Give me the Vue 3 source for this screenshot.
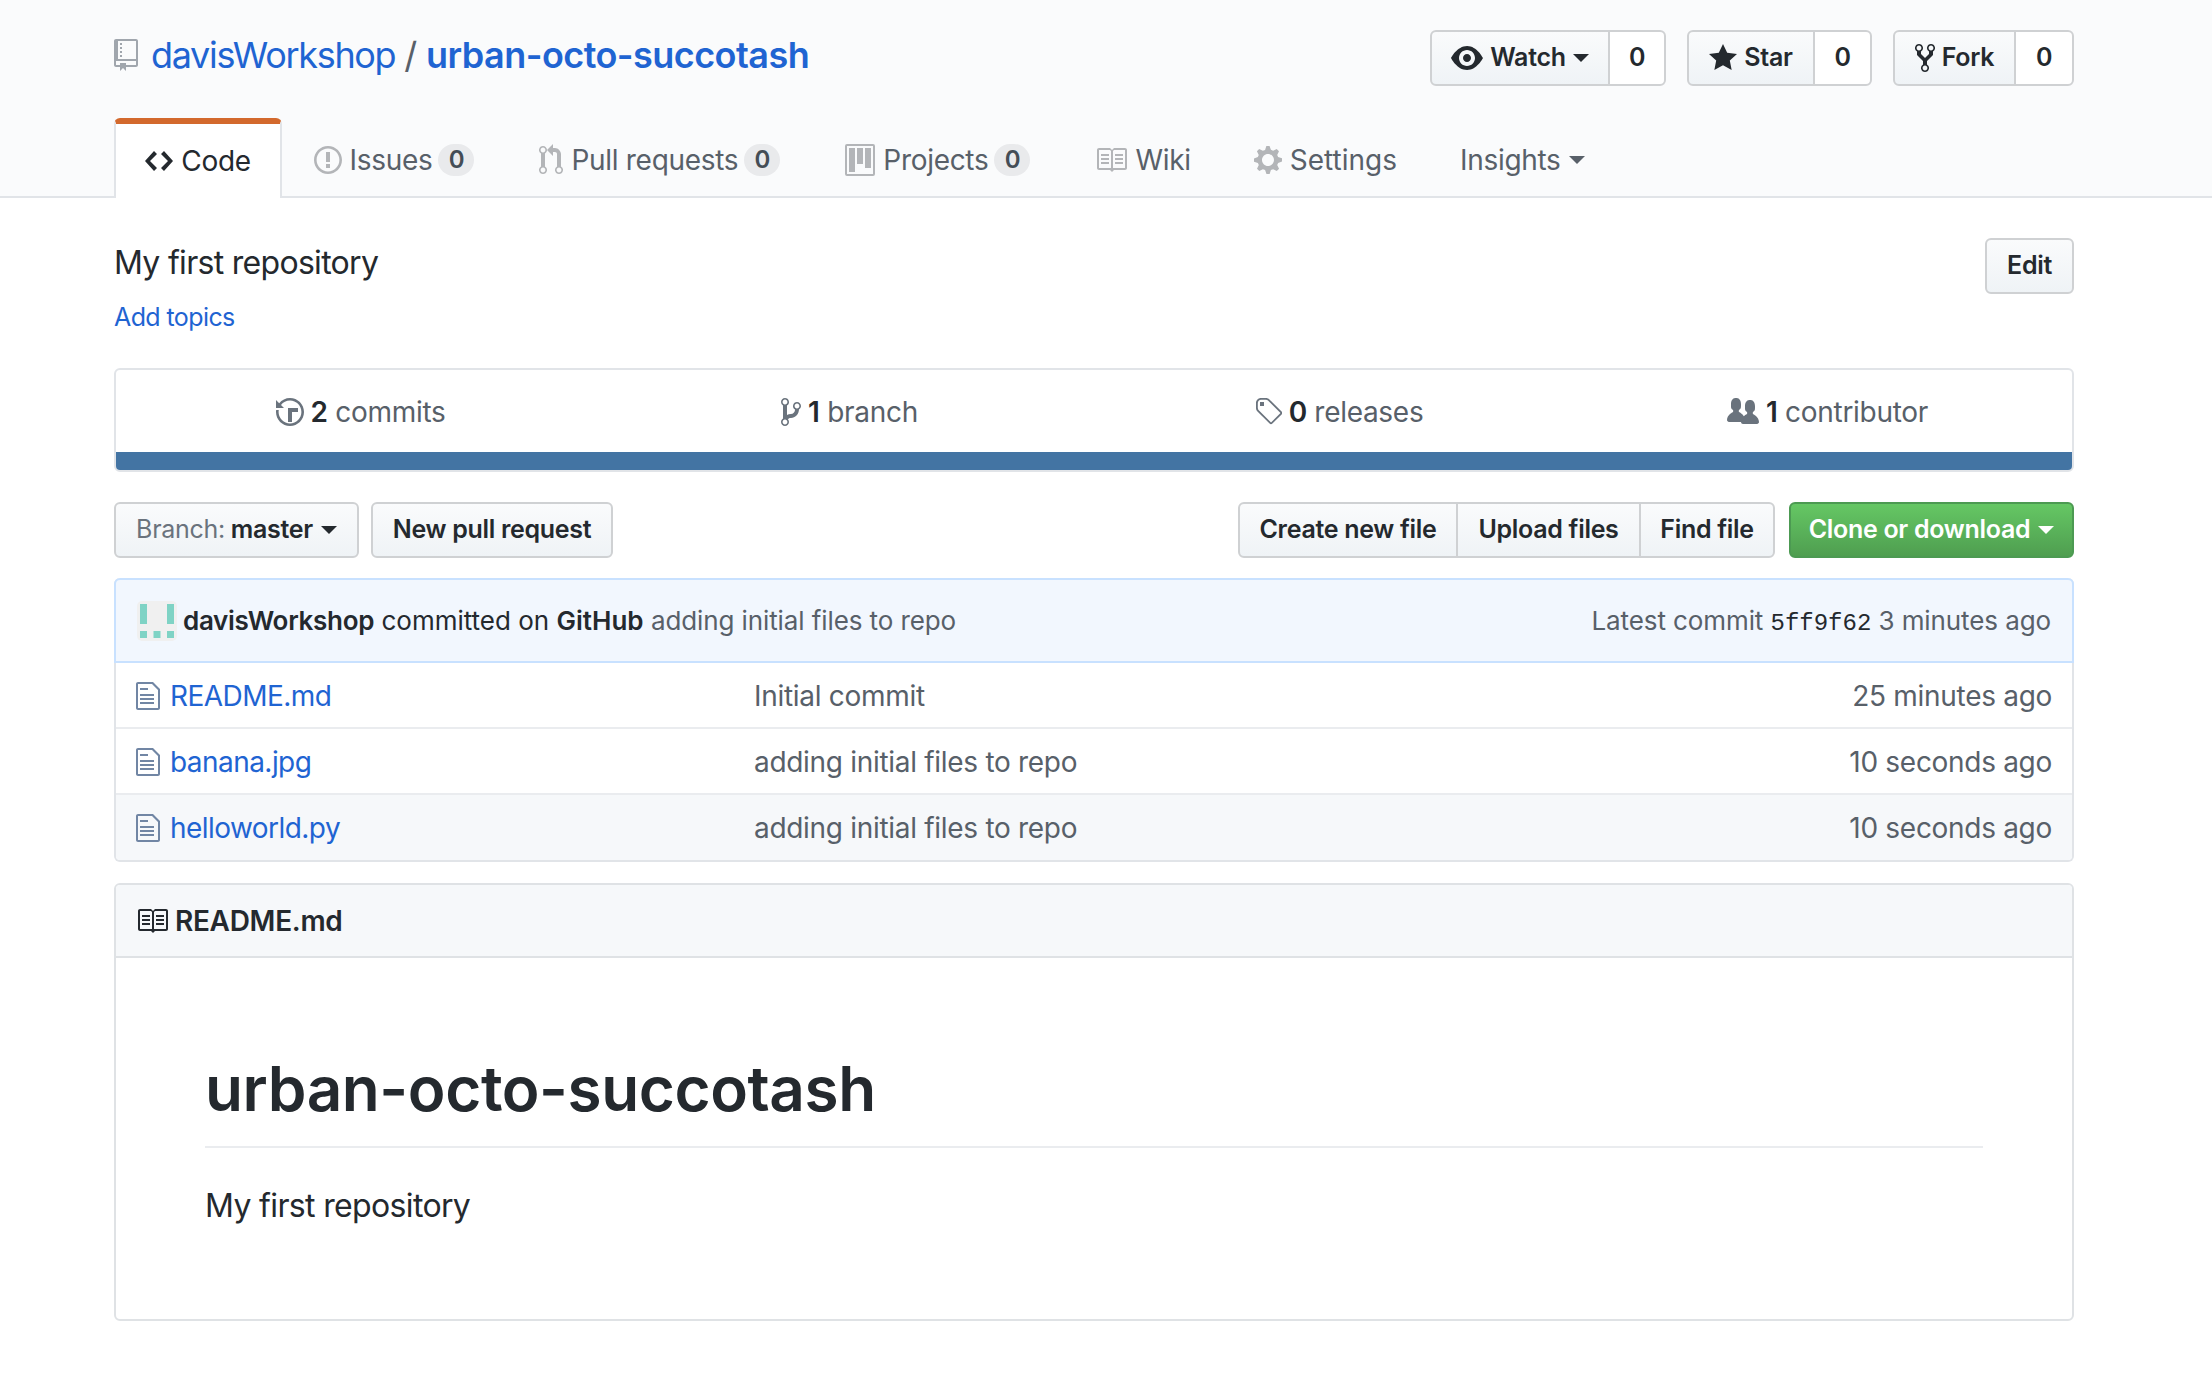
<script setup>
// Repository landing page, drawn at twice the usual scale of the old GitHub layout.
const ICONS = {
  repo: ["0 0 12 16", "M4 9H3V8h1v1zm0-3H3v1h1V6zm0-2H3v1h1V4zm0-2H3v1h1V2zm8-1v12c0 .55-.45 1-1 1H6v2l-1.5-1.5L3 16v-2H1c-.55 0-1-.45-1-1V1c0-.55.45-1 1-1h10c.55 0 1 .45 1 1zm-1 10H1v2h2v-1h3v1h5v-2zm0-10H2v9h9V1z"],
  eye: ["0 0 16 16", "M8.06 2C3 2 0 8 0 8s3 6 8.06 6C13 14 16 8 16 8s-3-6-7.94-6zM8 12c-2.2 0-4-1.78-4-4 0-2.2 1.8-4 4-4 2.22 0 4 1.8 4 4 0 2.22-1.78 4-4 4zm2-4c0 1.11-.89 2-2 2-1.11 0-2-.89-2-2 0-1.11.89-2 2-2 1.11 0 2 .89 2 2z"],
  star: ["0 0 14 16", "M14 6l-4.9-.64L7 1 4.9 5.36 0 6l3.6 3.26L2.67 14 7 11.67 11.33 14l-.93-4.74L14 6z"],
  fork: ["0 0 10 16", "M8 1a1.993 1.993 0 0 0-1 3.72V6L5 8 3 6V4.72A1.993 1.993 0 0 0 2 1a1.993 1.993 0 0 0-1 3.72V6.5l3 3v1.78A1.993 1.993 0 0 0 5 15a1.993 1.993 0 0 0 1-3.72V9.5l3-3V4.72A1.993 1.993 0 0 0 8 1zM2 4.2C1.34 4.2.8 3.65.8 3c0-.65.55-1.2 1.2-1.2.65 0 1.2.55 1.2 1.2 0 .65-.55 1.2-1.2 1.2zm3 10c-.66 0-1.2-.55-1.2-1.2 0-.65.55-1.2 1.2-1.2.65 0 1.2.55 1.2 1.2 0 .65-.55 1.2-1.2 1.2zm3-10c-.66 0-1.2-.55-1.2-1.2 0-.65.55-1.2 1.2-1.2.65 0 1.2.55 1.2 1.2 0 .65-.55 1.2-1.2 1.2z"],
  code: ["0 0 14 16", "M9.5 3L8 4.5 11.5 8 8 11.5 9.5 13 14 8 9.5 3zm-5 0L0 8l4.5 5L6 11.5 2.5 8 6 4.5 4.5 3z"],
  issue: ["0 0 14 16", "M7 2.3c3.14 0 5.7 2.56 5.7 5.7s-2.56 5.7-5.7 5.7A5.71 5.71 0 0 1 1.3 8c0-3.14 2.56-5.7 5.7-5.7zM7 1C3.14 1 0 4.14 0 8s3.14 7 7 7 7-3.14 7-7-3.14-7-7-7zm1 3H6v5h2V4zm0 6H6v2h2v-2z"],
  pull: ["0 0 12 16", "M11 11.28V5c-.03-.78-.34-1.47-.94-2.06C9.46 2.35 8.78 2.03 8 2H7V0L4 3l3 3V4h1c.27.02.48.11.69.31.21.2.3.42.31.69v6.28A1.993 1.993 0 0 0 10 15a1.993 1.993 0 0 0 1-3.72zm-1 2.92c-.66 0-1.2-.55-1.2-1.2 0-.65.55-1.2 1.2-1.2.65 0 1.2.55 1.2 1.2 0 .65-.55 1.2-1.2 1.2zM4 3c0-1.11-.89-2-2-2a1.993 1.993 0 0 0-1 3.72v6.56A1.993 1.993 0 0 0 2 15a1.993 1.993 0 0 0 1-3.72V4.72c.59-.34 1-.98 1-1.72zm-.8 10c0 .66-.55 1.2-1.2 1.2-.65 0-1.2-.55-1.2-1.2 0-.65.55-1.2 1.2-1.2.65 0 1.2.55 1.2 1.2zM2 4.2C1.34 4.2.8 3.65.8 3c0-.65.55-1.2 1.2-1.2.65 0 1.2.55 1.2 1.2 0 .65-.55 1.2-1.2 1.2z"],
  project: ["0 0 15 16", "M10 12h3V2h-3v10zm-4-2h3V2H6v8zm-4 4h3V2H2v12zm-1 1h13V1H1v14zM14 0H1a1 1 0 0 0-1 1v14a1 1 0 0 0 1 1h13a1 1 0 0 0 1-1V1a1 1 0 0 0-1-1z"],
  book: ["0 0 16 16", "M3 5h4v1H3V5zm0 3h4V7H3v1zm0 2h4V9H3v1zm11-5h-4v1h4V5zm0 2h-4v1h4V7zm0 2h-4v1h4V9zm2-6v9c0 .55-.45 1-1 1H9.5l-1 1-1-1H2c-.55 0-1-.45-1-1V3c0-.55.45-1 1-1h5.5l1 1 1-1H15c.55 0 1 .45 1 1zm-8 .5L7.5 3H2v9h6V3.5zm7-.5H9.5l-.5.5V12h6V3z"],
  gear: ["0 0 14 16", "M14 8.77v-1.6l-1.94-.64-.45-1.09.88-1.84-1.13-1.13-1.81.91-1.09-.45-.69-1.92h-1.6l-.63 1.94-1.11.45-1.84-.88-1.13 1.13.91 1.81-.45 1.09L0 7.23v1.59l1.94.64.45 1.09-.88 1.84 1.13 1.13 1.81-.91 1.09.45.69 1.92h1.59l.63-1.94 1.11-.45 1.84.88 1.13-1.13-.92-1.81.47-1.09L14 8.75v.02zM7 11c-1.66 0-3-1.34-3-3s1.34-3 3-3 3 1.34 3 3-1.34 3-3 3z"],
  history: ["0 0 14 16", "M8 13H6V6h5v2H8v5zM7 1C4.81 1 2.87 2.02 1.59 3.59L0 2v4h4L2.5 4.5C3.55 3.17 5.17 2.3 7 2.3c3.14 0 5.7 2.56 5.7 5.7s-2.56 5.7-5.7 5.7A5.71 5.71 0 0 1 1.3 8c0-.34.03-.67.09-1H.08C.03 7.33 0 7.66 0 8c0 3.86 3.14 7 7 7s7-3.14 7-7-3.14-7-7-7z"],
  branch: ["0 0 10 16", "M10 5c0-1.11-.89-2-2-2a1.993 1.993 0 0 0-1 3.72v.3c-.02.52-.23.98-.63 1.38-.4.4-.86.61-1.38.63-.83.02-1.48.16-2 .45V4.72a1.993 1.993 0 0 0-1-3.72C.88 1 0 1.89 0 3a2 2 0 0 0 1 1.72v6.56c-.59.35-1 .99-1 1.72 0 1.11.89 2 2 2 1.11 0 2-.89 2-2 0-.53-.2-1-.53-1.36.09-.06.48-.41.59-.47.25-.11.56-.17.94-.17 1.05-.05 1.95-.45 2.75-1.25S8.95 7.77 9 6.73h-.02C9.59 6.37 10 5.73 10 5zM2 1.8c.66 0 1.2.55 1.2 1.2 0 .65-.55 1.2-1.2 1.2C1.35 4.2.8 3.65.8 3c0-.65.55-1.2 1.2-1.2zm0 12.41c-.66 0-1.2-.55-1.2-1.2 0-.65.55-1.2 1.2-1.2.65 0 1.2.55 1.2 1.2 0 .65-.55 1.2-1.2 1.2zm6-8c-.66 0-1.2-.55-1.2-1.2 0-.65.55-1.2 1.2-1.2.65 0 1.2.55 1.2 1.2 0 .65-.55 1.2-1.2 1.2z"],
  tag: ["0 0 14 16", "M7.73 1.73C7.26 1.26 6.62 1 5.96 1H3.5C2.13 1 1 2.13 1 3.5v2.47c0 .66.27 1.3.73 1.77l6.06 6.06c.39.39 1.02.39 1.41 0l4.59-4.59a.996.996 0 0 0 0-1.41L7.73 1.73zM2.38 7.09c-.31-.3-.47-.7-.47-1.13V3.5c0-.88.72-1.59 1.59-1.59h2.47c.42 0 .83.16 1.13.47l6.14 6.13-4.73 4.73-6.13-6.15zM3.01 3h2v2H3V3h.01z"],
  people: ["0 0 16 16", "M16 12.999c0 .439-.45 1-1 1H7.995c-.539 0-.994-.447-.995-.999H1c-.54 0-1-.561-1-1 0-2.634 3-4 3-4s.229-.409 0-1c-.841-.621-1.058-.59-1-3 .058-2.419 1.367-3 2.5-3s2.442.58 2.5 3c.058 2.41-.159 2.379-1 3-.229.59 0 1 0 1s1.549.711 2.42 2.088C9.196 9.369 10 8.999 10 8.999s.229-.409 0-1c-.841-.62-1.058-.59-1-3 .058-2.419 1.367-3 2.5-3s2.437.581 2.495 3c.059 2.41-.158 2.38-1 3-.229.59 0 1 0 1s3.005 1.366 3.005 4z"],
  file: ["0 0 12 16", "M6 5H2V4h4v1zM2 8h7V7H2v1zm0 2h7V9H2v1zm0 2h7v-1H2v1zm10-7.5V14c0 .55-.45 1-1 1H1c-.55 0-1-.45-1-1V2c0-.55.45-1 1-1h7.5L12 4.5zM11 5L8 2H1v12h10V5z"],
};

const actions = [
  { icon: "eye", w: 32, label: "Watch", caret: true, count: 0 },
  { icon: "star", w: 28, label: "Star", count: 0 },
  { icon: "fork", w: 20, label: "Fork", count: 0 },
];
const tabs = [
  { icon: "code", w: 28, label: "Code", active: true },
  { icon: "issue", w: 28, label: "Issues", count: 0 },
  { icon: "pull", w: 24, label: "Pull requests", count: 0 },
  { icon: "project", w: 30, label: "Projects", count: 0 },
  { icon: "book", w: 32, label: "Wiki" },
  { icon: "gear", w: 28, label: "Settings" },
  { label: "Insights", caret: true },
];
const stats = [
  { icon: "history", w: 28, num: 2, label: "commits" },
  { icon: "branch", w: 20, num: 1, label: "branch" },
  { icon: "tag", w: 28, num: 0, label: "releases" },
  { icon: "people", w: 32, num: 1, label: "contributor" },
];
const files = [
  { name: "README.md", msg: "Initial commit", age: "25 minutes ago" },
  { name: "banana.jpg", msg: "adding initial files to repo", age: "10 seconds ago" },
  { name: "helloworld.py", msg: "adding initial files to repo", age: "10 seconds ago" },
];
</script>

<template>
  <div class="page">
    <header class="head">
      <div class="wrap">
        <div class="title-row">
          <h1 class="title">
            <svg class="ic repo-ic" width="24" height="32" :viewBox="ICONS.repo[0]"><path :d="ICONS.repo[1]" /></svg>
            <a class="owner">davisWorkshop</a>
            <span class="slash">/</span>
            <a class="name">urban-octo-succotash</a>
          </h1>
          <div class="actions">
            <div v-for="a in actions" :key="a.label" class="action" :class="a.label.toLowerCase()">
              <span class="btn action-btn">
                <svg class="ic" :width="a.w" height="32" :viewBox="ICONS[a.icon][0]"><path :d="ICONS[a.icon][1]" /></svg>
                <span>{{ a.label }}</span>
                <i v-if="a.caret" class="caret" />
              </span>
              <span class="social-count">{{ a.count }}</span>
            </div>
          </div>
        </div>
        <nav class="tabs">
          <a v-for="t in tabs" :key="t.label" class="tab" :class="{ active: t.active }">
            <svg v-if="t.icon" class="ic" :width="t.w" height="32" :viewBox="ICONS[t.icon][0]"><path :d="ICONS[t.icon][1]" /></svg>
            <span class="tab-label">{{ t.label }}</span>
            <span v-if="t.count !== undefined" class="counter">{{ t.count }}</span>
            <i v-if="t.caret" class="caret" />
          </a>
        </nav>
      </div>
    </header>

    <main class="wrap">
      <section class="meta">
        <div>
          <div class="desc">My first repository</div>
          <a class="topics">Add topics</a>
        </div>
        <span class="btn edit">Edit</span>
      </section>

      <section class="summary">
        <ul class="numbers">
          <li v-for="s in stats" :key="s.label">
            <svg class="ic" :width="s.w" height="32" :viewBox="ICONS[s.icon][0]"><path :d="ICONS[s.icon][1]" /></svg>
            <span><b>{{ s.num }}</b> {{ s.label }}</span>
          </li>
        </ul>
        <div class="lang-bar" />
      </section>

      <section class="file-nav">
        <div class="nav-left">
          <span class="btn branch"><em>Branch:</em> master <i class="caret" /></span>
          <span class="btn">New pull request</span>
        </div>
        <div class="nav-right">
          <div class="btn-group">
            <span class="btn">Create new file</span>
            <span class="btn">Upload files</span>
            <span class="btn">Find file</span>
          </div>
          <span class="btn primary">Clone or download <i class="caret" /></span>
        </div>
      </section>

      <section class="files">
        <div class="tease">
          <div class="tease-left">
            <svg class="avatar" width="40" height="40" viewBox="0 0 40 40">
              <rect width="40" height="40" rx="5" fill="#f0f0f0" />
              <g fill="#7fd3c5">
                <rect x="3" y="3" width="7" height="20" />
                <rect x="30" y="3" width="7" height="20" />
                <rect x="3" y="30" width="7" height="7" />
                <rect x="16.5" y="30" width="7" height="7" />
                <rect x="30" y="30" width="7" height="7" />
              </g>
            </svg>
            <span><b>davisWorkshop</b> committed on <b>GitHub</b> <span class="muted">adding initial files to repo</span></span>
          </div>
          <div class="muted tease-right">Latest commit <code>5ff9f62</code> 3 minutes ago</div>
        </div>
        <div v-for="(f, i) in files" :key="f.name" class="file-row" :class="{ last: i === files.length - 1 }">
          <div class="file-name">
            <svg class="file-ic" width="24" height="32" :viewBox="ICONS.file[0]"><path :d="ICONS.file[1]" /></svg>
            <a>{{ f.name }}</a>
          </div>
          <div class="file-msg">{{ f.msg }}</div>
          <div class="file-age">{{ f.age }}</div>
        </div>
      </section>

      <section class="readme">
        <div class="readme-head">
          <svg class="book-ic" width="32" height="32" :viewBox="ICONS.book[0]"><path :d="ICONS.book[1]" /></svg>
          README.md
        </div>
        <article class="readme-body">
          <h2>urban-octo-succotash</h2>
          <p>My first repository</p>
        </article>
      </section>
    </main>
  </div>
</template>

<style scoped>
* {
  box-sizing: border-box;
}
.page {
  min-height: 1390px;
  background: #fff;
  color: #24292e;
  font: 28px/1.5 Inter, "Noto Sans", sans-serif;
  letter-spacing: -0.3px;
}
.wrap {
  width: 1960px;
  margin-left: 114px;
}
.ic {
  fill: currentColor;
  fill-rule: evenodd;
  flex: none;
}
.head {
  height: 198px;
  background: #fafbfc;
  border-bottom: 2px solid #e1e4e8;
}
.title-row {
  display: flex;
  justify-content: space-between;
  padding-top: 30px;
  height: 86px;
}
.title {
  display: flex;
  align-items: center;
  height: 50px;
  margin: 0;
  font-size: 36px;
  font-weight: 400;
  color: #586069;
}
.repo-ic {
  color: #a0a6ad;
  margin-right: 13px;
}
.owner,
.name {
  color: #1f64d2;
}
.owner {
  letter-spacing: -1.32px;
}
.slash {
  margin: 0 9px;
}
.name {
  font-weight: 600;
  letter-spacing: -0.55px;
}
.actions {
  display: flex;
  gap: 21px;
}
.action {
  display: flex;
  height: 56px;
}
.watch {
  width: 236px;
}
.star {
  width: 185px;
}
.fork {
  width: 181px;
}
.btn {
  display: inline-flex;
  align-items: center;
  justify-content: center;
  height: 56px;
  padding: 0 20px;
  border: 2px solid #cfd1d3;
  border-radius: 6px;
  background: linear-gradient(#fafbfc, #eff3f6);
  font-size: 25px;
  font-weight: 600;
  white-space: pre;
}
.action-btn {
  flex: 1;
  gap: 7px;
  padding: 0;
  border-radius: 6px 0 0 6px;
}
.social-count {
  display: flex;
  align-items: center;
  justify-content: center;
  width: 58px;
  margin-left: -2px;
  border: 2px solid #cfd1d3;
  border-radius: 0 6px 6px 0;
  background: #fff;
  font-size: 25px;
  font-weight: 600;
}
.star .social-count {
  width: 59px;
}
.fork .social-count {
  width: 60px;
}
.caret {
  display: inline-block;
  width: 0;
  height: 0;
  border: 8px solid transparent;
  border-top-color: currentColor;
  border-bottom: 0;
}
.tabs {
  display: flex;
  height: 80px;
  margin-top: 32px;
}
.tab {
  display: flex;
  align-items: center;
  gap: 8px;
  height: 80px;
  padding: 4px 31.5px 0;
  color: #586069;
}
.tab .ic {
  color: #b3b5b8;
}
.tab:nth-child(6) .tab-label {
  letter-spacing: 0;
}
.tab.active {
  width: 168px;
  justify-content: center;
  background: #fff;
  border: 2px solid #e1e4e8;
  border-top: 6px solid #d3692d;
  border-bottom: 0;
  border-radius: 6px 6px 0 0;
  color: #24292e;
  padding: 0;
}
.tab.active .ic {
  color: #24292e;
}
.counter {
  display: flex;
  align-items: center;
  justify-content: center;
  width: 36px;
  height: 32px;
  margin: 0 2px 0 -2px;
  border-radius: 16px;
  background: #e9eaec;
  font-size: 24px;
  font-weight: 600;
  color: #444d56;
}
.meta {
  display: flex;
  justify-content: space-between;
  align-items: flex-start;
  padding-top: 40px;
  height: 170px;
}
.desc {
  font-size: 32px;
  line-height: 50px;
  letter-spacing: -0.7px;
}
.topics {
  display: block;
  margin-top: 12px;
  font-size: 25px;
  line-height: 34px;
  letter-spacing: -0.6px;
  color: #1f64d2;
}
.edit {
  width: 89px;
  padding: 0;
}
.summary {
  height: 104px;
  border: 2px solid #e1e4e8;
  border-radius: 6px;
  overflow: hidden;
}
.numbers {
  display: grid;
  grid-template-columns: repeat(4, 1fr);
  height: 82px;
  margin: 0;
  padding: 2px 0 0;
  list-style: none;
  color: #586069;
}
.numbers li {
  display: flex;
  align-items: center;
  justify-content: center;
  gap: 7px;
  white-space: pre;
}
.numbers .ic {
  color: #6a737d;
}
.numbers b {
  font-weight: 600;
  color: #24292e;
}
.lang-bar {
  height: 18px;
  background: #4374a3;
}
.file-nav {
  display: flex;
  justify-content: space-between;
  margin-top: 30px;
}
.nav-left {
  display: flex;
  gap: 12px;
}
.branch {
  width: 245px;
  padding: 0;
}
.branch em {
  font-style: normal;
  font-weight: 400;
  color: #6a737d;
}
.branch .caret,
.primary .caret {
  margin-left: 2px;
}
.nav-left .btn:nth-child(2) {
  width: 242px;
  padding: 0;
}
.nav-right {
  display: flex;
  gap: 14px;
}
.btn-group {
  display: flex;
}
.btn-group .btn {
  padding: 0;
  margin-left: -2px;
  border-radius: 0;
}
.btn-group .btn:nth-child(1) {
  width: 220px;
  margin-left: 0;
  border-radius: 6px 0 0 6px;
}
.btn-group .btn:nth-child(2) {
  width: 185px;
}
.btn-group .btn:nth-child(3) {
  width: 136px;
  border-radius: 0 6px 6px 0;
}
.primary {
  width: 285px;
  padding: 0;
  border-color: #4c9a52;
  background: linear-gradient(#65c764, #4f9e50);
  color: #fff;
}
.files {
  margin-top: 20px;
  border: 2px solid #e1e4e8;
  border-top: 0;
  border-radius: 6px;
}
.tease {
  display: flex;
  justify-content: space-between;
  align-items: center;
  height: 85px;
  margin: 0 -2px;
  padding: 0 21px 0 21px;
  background: #f2f7fe;
  border: 2px solid #c8e1ff;
  border-radius: 6px 6px 0 0;
  font-size: 26px;
  letter-spacing: 0;
  white-space: pre;
}
.tease-left {
  display: flex;
  align-items: center;
}
.avatar {
  margin-right: 6px;
}
.tease b {
  font-weight: 600;
}
.tease b:first-child {
  letter-spacing: -0.3px;
}
.muted {
  color: #586069;
  letter-spacing: -0.1px;
}
.tease-right {
  padding-top: 1px;
}
.tease code {
  font-family: "Liberation Mono", monospace;
  font-size: 24px;
  letter-spacing: 0;
  color: #24292e;
}
.file-row {
  display: flex;
  align-items: center;
  height: 66px;
  padding: 2px 20px 0 20px;
  border-bottom: 2px solid #eaecef;
  color: #586069;
}
.file-row.last {
  height: 65px;
  padding-top: 0;
  background: #f6f8fa;
  border-bottom: 0;
  border-radius: 0 0 4px 4px;
}
.file-name {
  display: flex;
  align-items: center;
  gap: 10px;
  width: 618px;
  color: #1f64d2;
}
.file-name a {
  letter-spacing: -0.55px;
}
.file-ic {
  fill: #7186a4;
  flex: none;
}
.file-msg {
  flex: 1;
}
.readme {
  margin-top: 21px;
  height: 438px;
  border: 2px solid #dfe2e5;
  border-radius: 6px;
}
.readme-head {
  display: flex;
  align-items: center;
  gap: 7px;
  height: 73px;
  padding-left: 20px;
  background: #f6f8fa;
  border-bottom: 2px solid #dfe2e5;
  border-radius: 4px 4px 0 0;
  font-weight: 600;
}
.book-ic {
  fill: #24292e;
}
.readme-body {
  padding: 90px 89px 0;
}
.readme-body h2 {
  margin: 0;
  height: 100px;
  border-bottom: 2px solid #eaecef;
  font-size: 62px;
  font-weight: 600;
  line-height: 82px;
  letter-spacing: -0.4px;
}
.readme-body p {
  margin: 28px 0 0;
  font-size: 32px;
  line-height: 60px;
  letter-spacing: -0.65px;
}
</style>
